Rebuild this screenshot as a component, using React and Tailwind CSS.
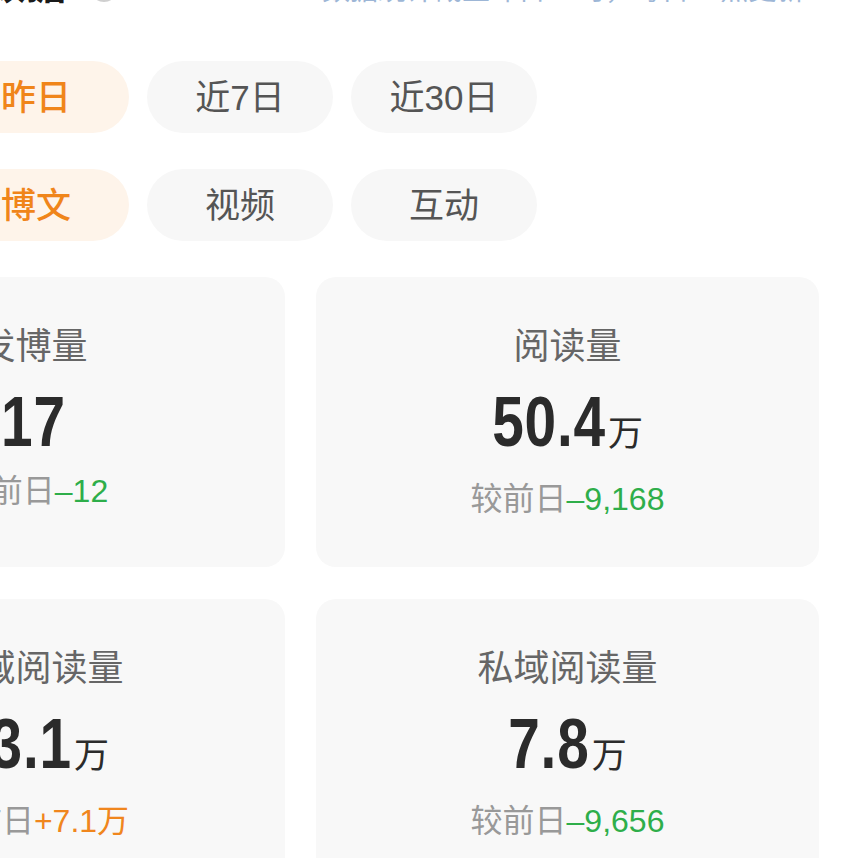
import React from "react";

const sans = "font-['Liberation_Sans','Noto_Sans_CJK_SC',sans-serif]";
const num = "font-['Liberation_Sans',sans-serif]";

function Chip({ label, active }) {
  return (
    <div
      className={
        "w-[186px] h-[72px] shrink-0 rounded-full flex items-center justify-center text-[35px] leading-none " +
        (active ? "bg-[#fef4ea] text-[#f0851a] font-medium" : "bg-[#f7f7f7] text-[#555555]")
      }
    >
      {label}
    </div>
  );
}

function Card({ label, value, unit, delta, up, subOffset, squeeze }) {
  return (
    <div className="h-[290px] rounded-[20px] bg-[#f8f8f8] flex flex-col items-center pt-[52px]">
      <div className="text-[36px] leading-none h-[36px] text-[#666666]">{label}</div>
      <div className="mt-[21px] flex items-baseline text-[#2b2b2b]">
        <span
          className={
            num +
            " inline-block origin-center scale-x-[0.8] text-[71px] leading-none font-bold tracking-[1px] " +
            squeeze
          }
        >
          {value}
        </span>
        {unit && <span className="text-[35px] leading-none ml-[2px]">{unit}</span>}
      </div>
      <div className={"text-[32px] leading-none " + subOffset}>
        <span className="text-[#999999]">较前日</span>
        <span className={up ? "text-[#f0861d]" : "text-[#2eae4a]"}>{delta}</span>
      </div>
    </div>
  );
}

export default function App() {
  return (
    <div className={"w-[858px] h-[858px] overflow-hidden bg-white " + sans}>
      <div className="h-[50px] -mt-[44px] relative">
        <div className="absolute right-[792px] bottom-[1px] text-[40px] leading-none font-bold text-[#1a1a1a] whitespace-nowrap">
          实时数据
        </div>
        <div className="absolute left-[90px] bottom-[4px] w-[28px] h-[28px] rounded-full bg-[#cfcfcf]" />
        <div className="absolute left-[322px] bottom-[1px] text-[28px] leading-none text-[#9db6d6] whitespace-nowrap">
          数据统计截至昨日24时，每日12点更新
        </div>
      </div>

      <div className="mt-[55px] -ml-[57px] flex gap-[18px]">
        <Chip label="昨日" active />
        <Chip label="近7日" />
        <Chip label="近30日" />
      </div>
      <div className="mt-[36px] -ml-[57px] flex gap-[18px]">
        <Chip label="博文" active />
        <Chip label="视频" />
        <Chip label="互动" />
      </div>

      <div className="mt-[36px] -ml-[218px] grid grid-cols-[503px_503px] gap-x-[31px] gap-y-[32px]">
        <Card label="发博量" value="17" delta="–12" subOffset="mt-[18px]" squeeze="-mx-[8px]" />
        <Card label="阅读量" value="50.4" unit="万" delta="–9,168" subOffset="mt-[26px]" squeeze="-mx-[14px]" />
        <Card label="公域阅读量" value="43.1" unit="万" delta="+7.1万" up subOffset="mt-[26px]" squeeze="-mx-[14px]" />
        <Card label="私域阅读量" value="7.8" unit="万" delta="–9,656" subOffset="mt-[26px]" squeeze="-mx-[10px]" />
      </div>
    </div>
  );
}
